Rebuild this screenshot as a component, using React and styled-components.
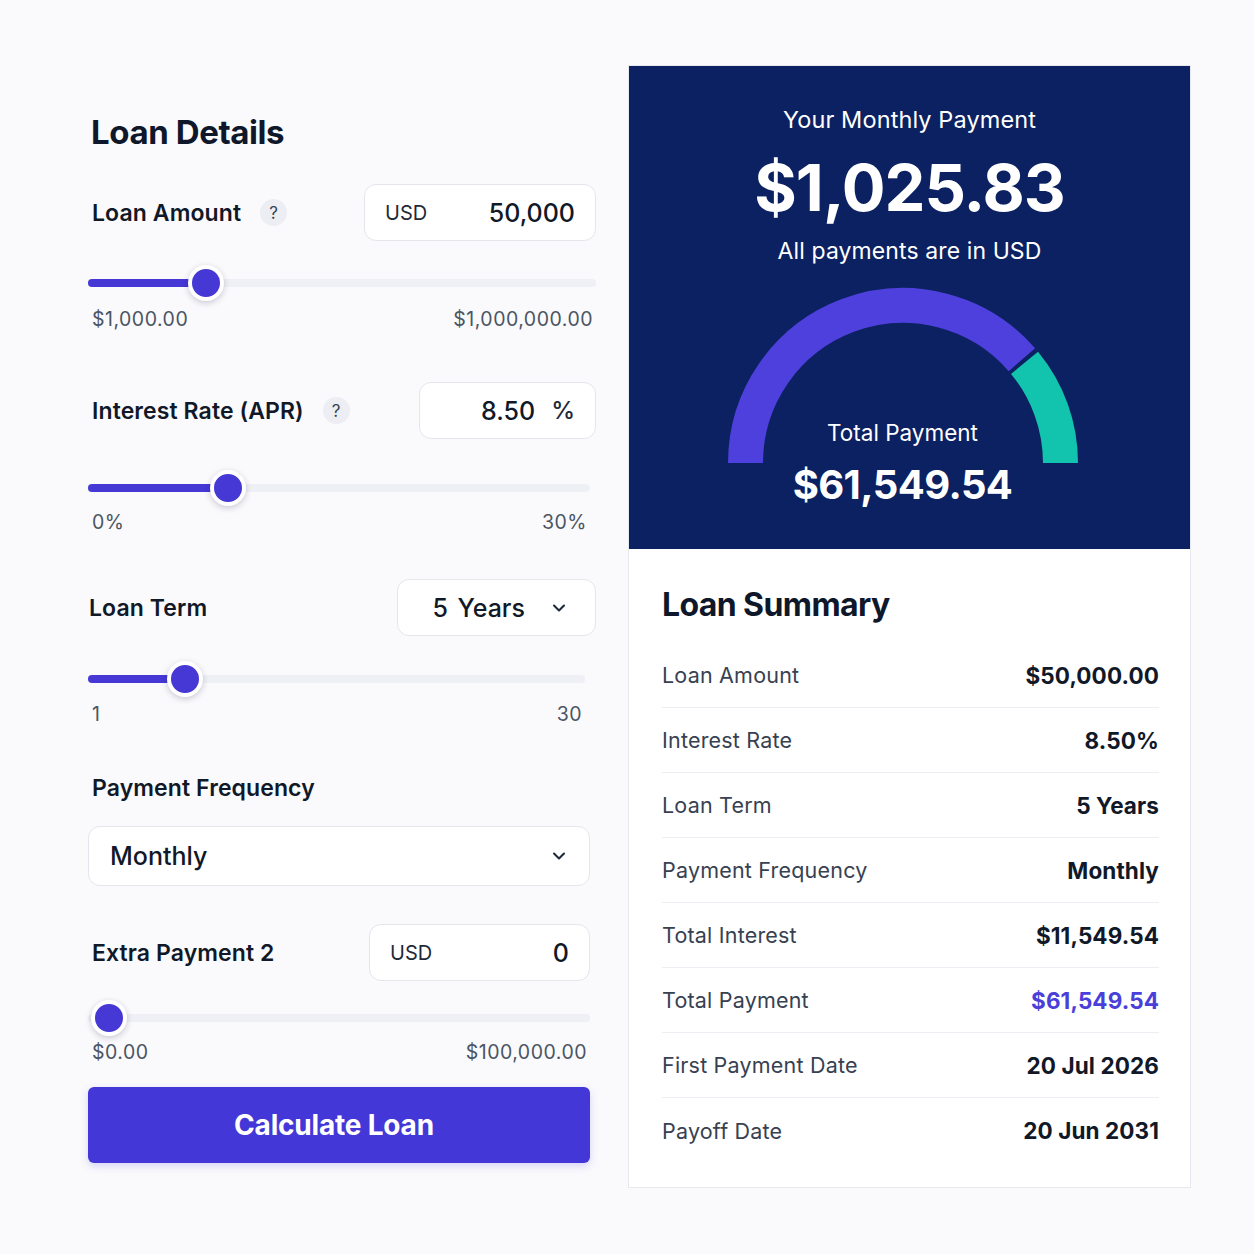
import styled, { createGlobalStyle } from "styled-components";
import { ChevronDown } from "lucide-react";

const GlobalStyle = createGlobalStyle`
  body {
    margin: 0;
    background: #fafafc;
    font-family: Inter, "Noto Sans", "Liberation Sans", sans-serif;
    color: #111827;
  }
  * { box-sizing: border-box; }
`;

const StyledPage = styled.div`
  display: flex;
  align-items: flex-start;
  gap: 32px;
  padding: 65px 0 0 88px;
`;

const StyledForm = styled.div`
  width: 508px;
  padding-top: 47px;
  display: flex;
  flex-direction: column;
`;

const StyledHeading = styled.h1`
  margin: 0;
  font-size: 33px;
  line-height: 40px;
  font-weight: 700;
  letter-spacing: -0.4px;
  color: #0f172a;
  padding-left: 3px;
`;

const StyledField = styled.div`
  margin-top: ${({ $gap }) => $gap}px;
  margin-right: ${({ $trim = 0 }) => $trim}px;
  display: flex;
  flex-direction: column;
`;

const StyledFieldHeader = styled.div`
  display: flex;
  align-items: center;
  justify-content: space-between;
  height: 57px;
`;

const StyledLabel = styled.div`
  display: flex;
  align-items: center;
  gap: 19px;
  padding-left: ${({ $inset = 4 }) => $inset}px;
  font-size: 23px;
  line-height: 26px;
  font-weight: 600;
  color: #111827;
  letter-spacing: 0.1px;
`;

const StyledHelp = styled.span`
  width: 27px;
  height: 27px;
  border-radius: 50%;
  background: #eceef3;
  color: #374151;
  font-size: 17px;
  font-weight: 400;
  display: inline-flex;
  align-items: center;
  justify-content: center;
`;

const StyledInput = styled.div`
  width: ${({ $width }) => $width}px;
  height: 57px;
  background: #fff;
  border: 1.5px solid #e4e6ec;
  border-radius: 12px;
  display: flex;
  align-items: center;
  justify-content: ${({ $align = "space-between" }) => $align};
  gap: ${({ $spacing = 0 }) => $spacing}px;
  padding: 0 20px;
`;

const StyledUnit = styled.span`
  font-size: ${({ $size = 20 }) => $size}px;
  color: #1f2937;
  font-weight: ${({ $weight = 400 }) => $weight};
`;

const StyledValue = styled.span`
  font-size: 25px;
  font-weight: 500;
  color: #111827;
`;

const StyledSelect = styled.div`
  width: ${({ $width }) => ($width ? `${$width}px` : "100%")};
  height: ${({ $height = 57 }) => $height}px;
  background: #fff;
  border: 1.5px solid #e4e6ec;
  border-radius: 12px;
  display: flex;
  align-items: center;
  justify-content: ${({ $align = "space-between" }) => $align};
  gap: 24px;
  padding: ${({ $pad = "0 22px" }) => $pad};
  font-size: 25px;
  font-weight: 500;
  color: #111827;
  word-spacing: 3px;
`;

const StyledSlider = styled.div`
  position: relative;
  height: 36px;
  margin-top: ${({ $gap }) => $gap}px;
  margin-right: ${({ $trim = 0 }) => $trim}px;
  display: flex;
  align-items: center;
`;

const StyledTrack = styled.div`
  width: 100%;
  height: 8px;
  border-radius: 4px;
  background: #eef0f5;
  overflow: hidden;
`;

const StyledFill = styled.div`
  height: 100%;
  background: #4538d4;
`;

const StyledThumb = styled.div`
  position: absolute;
  top: 0;
  width: 36px;
  height: 36px;
  border-radius: 50%;
  background: #4538d4;
  border: 4px solid #fff;
  box-shadow: 0 2px 6px rgba(30, 27, 75, 0.22);
  transform: translateX(-50%);
`;

const StyledRange = styled.div`
  display: flex;
  justify-content: space-between;
  margin-top: ${({ $gap = 5 }) => $gap}px;
  margin-right: ${({ $trim = 0 }) => $trim}px;
  padding: 0 3px 0 4px;
  font-size: 19.5px;
  line-height: 22px;
  letter-spacing: 0.5px;
  color: #4b5563;
`;

const StyledButton = styled.button`
  margin-top: 24px;
  margin-right: 6px;
  height: 76px;
  border: none;
  border-radius: 6px;
  background: #4437d8;
  color: #fff;
  font-family: inherit;
  font-size: 28px;
  font-weight: 700;
  letter-spacing: -0.2px;
  padding-right: 16px;
  box-shadow: 0 3px 8px rgba(68, 55, 216, 0.2);
`;

const StyledCard = styled.div`
  width: 563px;
  background: #fff;
  border: 1.5px solid #e6e8ee;
`;

const StyledResult = styled.div`
  height: 483px;
  background: #0c2161;
  color: #fff;
  display: flex;
  flex-direction: column;
  align-items: center;
  padding-top: 39px;
`;

const StyledResultTitle = styled.div`
  font-size: 23.5px;
  line-height: 30px;
  font-weight: 400;
  letter-spacing: 0.1px;
`;

const StyledAmount = styled.div`
  margin-top: 15px;
  font-size: 65px;
  line-height: 76px;
  font-weight: 700;
  letter-spacing: -1px;
`;

const StyledNote = styled.div`
  margin-top: 10px;
  font-size: 23px;
  line-height: 30px;
  letter-spacing: 0.1px;
`;

const StyledGauge = styled.div`
  position: relative;
  margin-top: 17px;
  margin-right: 14px;
  width: 360px;
  height: 226px;
`;

const StyledGaugeText = styled.div`
  position: absolute;
  top: 135px;
  left: 0;
  right: 0;
  display: flex;
  flex-direction: column;
  align-items: center;
  gap: 13px;
`;

const StyledGaugeLabel = styled.div`
  font-size: 22.5px;
  line-height: 30px;
`;

const StyledGaugeValue = styled.div`
  font-size: 40px;
  line-height: 48px;
  font-weight: 700;
  letter-spacing: -0.6px;
`;

const StyledSummary = styled.div`
  padding: 38px 31px 24px 33px;
`;

const StyledSummaryTitle = styled.h2`
  margin: 0 0 20px;
  font-size: 32px;
  line-height: 36px;
  font-weight: 700;
  letter-spacing: -0.6px;
  color: #0f172a;
`;

const StyledRow = styled.div`
  height: 65px;
  display: flex;
  align-items: center;
  justify-content: space-between;
  border-bottom: 1.5px solid #eceef3;
  &:last-child {
    border-bottom: none;
  }
`;

const StyledRowLabel = styled.span`
  font-size: 21.5px;
  letter-spacing: 0.2px;
  color: #374151;
`;

const StyledRowValue = styled.span`
  font-size: 22.5px;
  font-weight: 700;
  letter-spacing: 0.1px;
  color: ${({ $accent }) => ($accent ? "#4a3fd9" : "#111827")};
`;

function Slider({ pct, gap, trim }) {
  return (
    <StyledSlider $gap={gap} $trim={trim}>
      <StyledTrack>
        <StyledFill style={{ width: `${pct}%` }} />
      </StyledTrack>
      <StyledThumb style={{ left: `max(21px, ${pct}%)` }} />
    </StyledSlider>
  );
}

function Gauge() {
  return (
    <svg width="360" height="190" viewBox="0 0 360 190">
      <path
        d="M 22.5 180 A 157.5 157.5 0 0 1 298.9 76.7"
        fill="none"
        stroke="#4d40dc"
        strokeWidth="35"
      />
      <path
        d="M 301.5 79.8 A 157.5 157.5 0 0 1 337.5 180"
        fill="none"
        stroke="#12c3ad"
        strokeWidth="35"
      />
    </svg>
  );
}

const summary = [
  ["Loan Amount", "$50,000.00"],
  ["Interest Rate", "8.50%"],
  ["Loan Term", "5 Years"],
  ["Payment Frequency", "Monthly"],
  ["Total Interest", "$11,549.54"],
  ["Total Payment", "$61,549.54", true],
  ["First Payment Date", "20 Jul 2026"],
  ["Payoff Date", "20 Jun 2031"],
];

export default function App() {
  return (
    <>
      <GlobalStyle />
      <StyledPage>
        <StyledForm>
          <StyledHeading>Loan Details</StyledHeading>

          <StyledField $gap={32}>
            <StyledFieldHeader>
              <StyledLabel>
                Loan Amount <StyledHelp>?</StyledHelp>
              </StyledLabel>
              <StyledInput $width={232}>
                <StyledUnit>USD</StyledUnit>
                <StyledValue>50,000</StyledValue>
              </StyledInput>
            </StyledFieldHeader>
            <Slider pct={23.2} gap={24} />
            <StyledRange $gap={7}>
              <span>$1,000.00</span>
              <span>$1,000,000.00</span>
            </StyledRange>
          </StyledField>

          <StyledField $gap={52}>
            <StyledFieldHeader>
              <StyledLabel>
                Interest Rate (APR) <StyledHelp>?</StyledHelp>
              </StyledLabel>
              <StyledInput $width={177} $align="flex-end" $spacing={16}>
                <StyledValue>8.50</StyledValue>
                <StyledUnit $size={24} $weight={500}>%</StyledUnit>
              </StyledInput>
            </StyledFieldHeader>
            <Slider pct={27.9} gap={31} trim={6} />
            <StyledRange $trim={6}>
              <span>0%</span>
              <span>30%</span>
            </StyledRange>
          </StyledField>

          <StyledField $gap={46}>
            <StyledFieldHeader>
              <StyledLabel $inset={1}>Loan Term</StyledLabel>
              <StyledSelect $width={199} $align="flex-end" $pad="0 26px 0 0">
                5 Years
                <ChevronDown size={20} strokeWidth={2.5} color="#1f2937" />
              </StyledSelect>
            </StyledFieldHeader>
            <Slider pct={19.5} gap={25} trim={11} />
            <StyledRange $gap={6} $trim={11}>
              <span>1</span>
              <span>30</span>
            </StyledRange>
          </StyledField>

          <StyledField $gap={50} $trim={6}>
            <StyledLabel>Payment Frequency</StyledLabel>
            <StyledField $gap={25}>
              <StyledSelect $height={60} $pad="0 20px 0 21px">
                Monthly
                <ChevronDown size={20} strokeWidth={2.5} color="#1f2937" />
              </StyledSelect>
            </StyledField>
          </StyledField>

          <StyledField $gap={38} $trim={6}>
            <StyledFieldHeader>
              <StyledLabel>Extra Payment 2</StyledLabel>
              <StyledInput $width={221}>
                <StyledUnit>USD</StyledUnit>
                <StyledValue>0</StyledValue>
              </StyledInput>
            </StyledFieldHeader>
            <Slider pct={0} gap={19} />
            <StyledRange>
              <span>$0.00</span>
              <span>$100,000.00</span>
            </StyledRange>
          </StyledField>

          <StyledButton>Calculate Loan</StyledButton>
        </StyledForm>

        <StyledCard>
          <StyledResult>
            <StyledResultTitle>Your Monthly Payment</StyledResultTitle>
            <StyledAmount>$1,025.83</StyledAmount>
            <StyledNote>All payments are in USD</StyledNote>
            <StyledGauge>
              <Gauge />
              <StyledGaugeText>
                <StyledGaugeLabel>Total Payment</StyledGaugeLabel>
                <StyledGaugeValue>$61,549.54</StyledGaugeValue>
              </StyledGaugeText>
            </StyledGauge>
          </StyledResult>

          <StyledSummary>
            <StyledSummaryTitle>Loan Summary</StyledSummaryTitle>
            {summary.map(([label, value, accent]) => (
              <StyledRow key={label}>
                <StyledRowLabel>{label}</StyledRowLabel>
                <StyledRowValue $accent={accent}>{value}</StyledRowValue>
              </StyledRow>
            ))}
          </StyledSummary>
        </StyledCard>
      </StyledPage>
    </>
  );
}
